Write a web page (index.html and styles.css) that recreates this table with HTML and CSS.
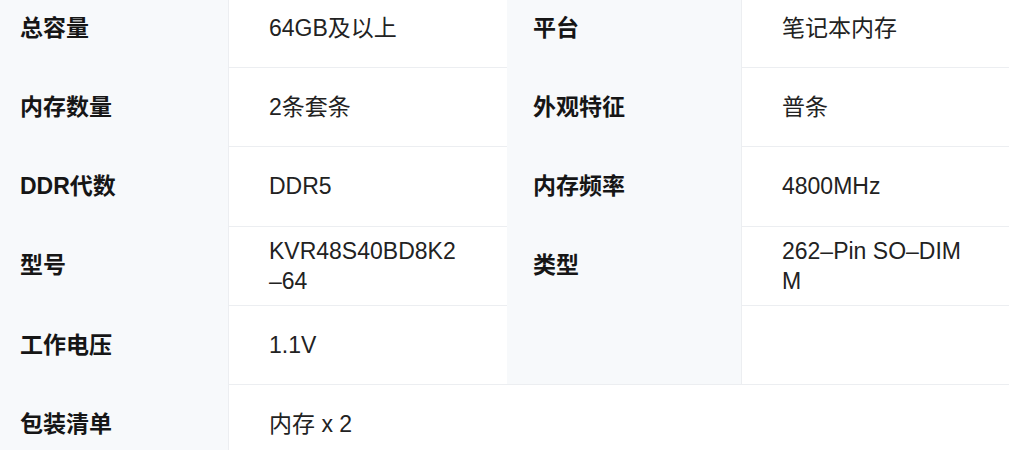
FILE: index.html
```html
<!DOCTYPE html>
<html lang="zh-CN">
<head>
  <meta charset="UTF-8" />
  <title>规格参数</title>
  <meta name="viewport" content="width=device-width, initial-scale=1.0" />
  <link rel="stylesheet" href="styles.css">
</head>
<body>

  <!-- Spec table -->
  <div class="spec-table">
    <div class="spec-label">总容量</div>
    <div class="spec-value">64GB及以上</div>
    <div class="spec-label right">平台</div>
    <div class="spec-value">笔记本内存</div>

    <div class="spec-label">内存数量</div>
    <div class="spec-value line">2条套条</div>
    <div class="spec-label right">外观特征</div>
    <div class="spec-value line">普条</div>

    <div class="spec-label">DDR代数</div>
    <div class="spec-value line">DDR5</div>
    <div class="spec-label right">内存频率</div>
    <div class="spec-value line">4800MHz</div>

    <div class="spec-label">型号</div>
    <div class="spec-value line">KVR48S40BD8K2–64</div>
    <div class="spec-label right">类型</div>
    <div class="spec-value line">262–Pin SO–DIMM</div>

    <div class="spec-label">工作电压</div>
    <div class="spec-value line">1.1V</div>
    <div class="spec-label right"></div>
    <div class="spec-value line"></div>

    <div class="spec-label">包装清单</div>
    <div class="spec-value line wide">内存 x 2</div>
  </div>

</body>
</html>
```

FILE: styles.css
```css
* {
  box-sizing: border-box;
  margin: 0;
  padding: 0;
}

body {
  background: #ffffff;
  font-family: "Liberation Sans", "Noto Sans CJK SC", sans-serif;
  font-size: 23px;
  line-height: 30px;
  overflow: hidden;
}

.spec-table {
  display: grid;
  grid-template-columns: 229px 278px 235px 1fr;
  margin-top: -11px;
}

.spec-label {
  display: flex;
  align-items: center;
  min-height: 78px;
  padding: 0 20px;
  background: #f7f9fb;
  border-right: 1px solid #eceef1;
  color: #161616;
  font-weight: 700;
}

.spec-label.right {
  padding-left: 26px;
}

.spec-value {
  display: flex;
  align-items: center;
  min-height: 78px;
  padding: 9px 40px;
  color: #222222;
  word-break: break-all;
}

.spec-value.line {
  border-top: 1px solid #eceef1;
  min-height: 79.3px;
}

.spec-value.wide {
  grid-column: 2 / 5;
}
```
